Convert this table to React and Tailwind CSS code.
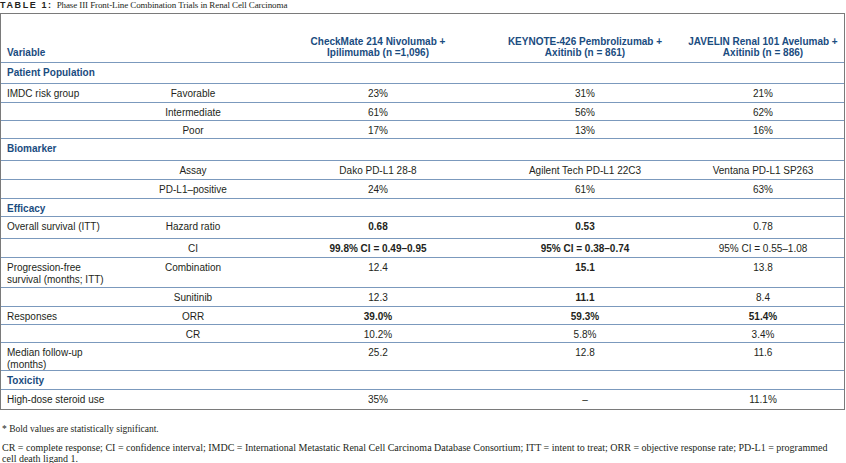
import React from 'react';

const cols = 'grid grid-cols-[128px_128px_242px_172px_173px]';

const rows = [
  { section: 'Patient Population', h: 'h-[21px]' },
  { h: 'h-[19px]', cells: ['IMDC risk group', 'Favorable', '23%', '31%', '21%'] },
  { h: 'h-[18px]', cells: ['', 'Intermediate', '61%', '56%', '62%'] },
  { h: 'h-[18px]', cells: ['', 'Poor', '17%', '13%', '16%'] },
  { section: 'Biomarker', h: 'h-[22px]' },
  { h: 'h-[19px]', cells: ['', 'Assay', 'Dako PD-L1 28-8', 'Agilent Tech PD-L1 22C3', 'Ventana PD-L1 SP263'] },
  { h: 'h-[19px]', cells: ['', 'PD-L1–positive', '24%', '61%', '63%'] },
  { section: 'Efficacy', h: 'h-[18px]' },
  { h: 'h-[22px]', cells: ['Overall survival (ITT)', 'Hazard ratio', '0.68', '0.53', '0.78'], bold: [2, 3] },
  { h: 'h-[19px]', cells: ['', 'CI', '99.8% CI = 0.49–0.95', '95% CI = 0.38–0.74', '95% CI = 0.55–1.08'], bold: [2, 3] },
  { h: 'h-[30px]', cells: [<>Progression-free<br />survival (months; ITT)</>, 'Combination', '12.4', '15.1', '13.8'], bold: [3] },
  { h: 'h-[19px]', cells: ['', 'Sunitinib', '12.3', '11.1', '8.4'], bold: [3] },
  { h: 'h-[18px]', cells: ['Responses', 'ORR', '39.0%', '59.3%', '51.4%'], bold: [2, 3, 4] },
  { h: 'h-[18px]', cells: ['', 'CR', '10.2%', '5.8%', '3.4%'] },
  { h: 'h-[28px]', cells: [<>Median follow-up<br />(months)</>, '', '25.2', '12.8', '11.6'] },
  { section: 'Toxicity', h: 'h-[19px]' },
  { h: 'h-[19px]', cells: ['High-dose steroid use', '', '35%', '–', '11.1%'], last: true },
];

const cellClass = [
  'pl-[6px] text-left',
  'text-center',
  'text-center',
  'text-center',
  'text-center pl-[11px]',
];

const Row = ({ row }) => {
  const border = row.last ? '' : 'border-b border-[#7b99bd]';
  if (row.section) {
    return (
      <div className={`${row.h} ${border} pl-[6px] pt-[4px] font-bold text-[#1a4c80] leading-[12px]`}>
        {row.section}
      </div>
    );
  }
  return (
    <div className={`${cols} ${row.h} ${border} pt-[4px] leading-[12px]`}>
      {row.cells.map((c, i) => (
        <div key={i} className={`${cellClass[i]} ${row.bold && row.bold.includes(i) ? 'font-bold' : ''}`}>
          {c}
        </div>
      ))}
    </div>
  );
};

export default function App() {
  return (
    <div className="w-[846px] h-[463px] bg-white text-[#231f20] overflow-hidden" style={{ fontFamily: '"Liberation Sans", Arial, sans-serif' }}>
      <div className="h-[13px] flex items-start leading-[11px] whitespace-nowrap">
        <span className="font-bold text-[9px] tracking-[1.6px] text-[#231f20]">TABLE 1:</span>
        <span className="ml-[4px] text-[9px] tracking-[-0.1px]" style={{ fontFamily: '"Liberation Serif", serif' }}>
          Phase III Front-Line Combination Trials in Renal Cell Carcinoma
        </span>
      </div>

      <div className="w-[845px] border border-[#7a7a7a] text-[10px]">
        <div className={`${cols} h-[49px] items-end pb-[4px] border-b border-[#7b99bd] font-bold text-[#1a4c80] leading-[11px]`}>
          <div className="pl-[6px]">Variable</div>
          <div></div>
          <div className="text-center">CheckMate 214 Nivolumab +<br />Ipilimumab (n =1,096)</div>
          <div className="text-center">KEYNOTE-426 Pembrolizumab +<br />Axitinib (n = 861)</div>
          <div className="text-center pl-[11px]">JAVELIN Renal 101 Avelumab +<br />Axitinib (n = 886)</div>
        </div>
        {rows.map((r, i) => (
          <Row key={i} row={r} />
        ))}
      </div>

      <div className="pl-[2px] pt-[14px] text-[9.5px] leading-[11px] text-[#231f20]" style={{ fontFamily: '"Liberation Serif", serif' }}>
        <p>* Bold values are statistically significant.</p>
        <p className="mt-[7px] text-[10px] whitespace-nowrap">
          CR = complete response; CI = confidence interval; IMDC = International Metastatic Renal Cell Carcinoma Database Consortium; ITT = intent to treat; ORR = objective response rate; PD-L1 = programmed
          <br />
          cell death ligand 1.
        </p>
      </div>
    </div>
  );
}
